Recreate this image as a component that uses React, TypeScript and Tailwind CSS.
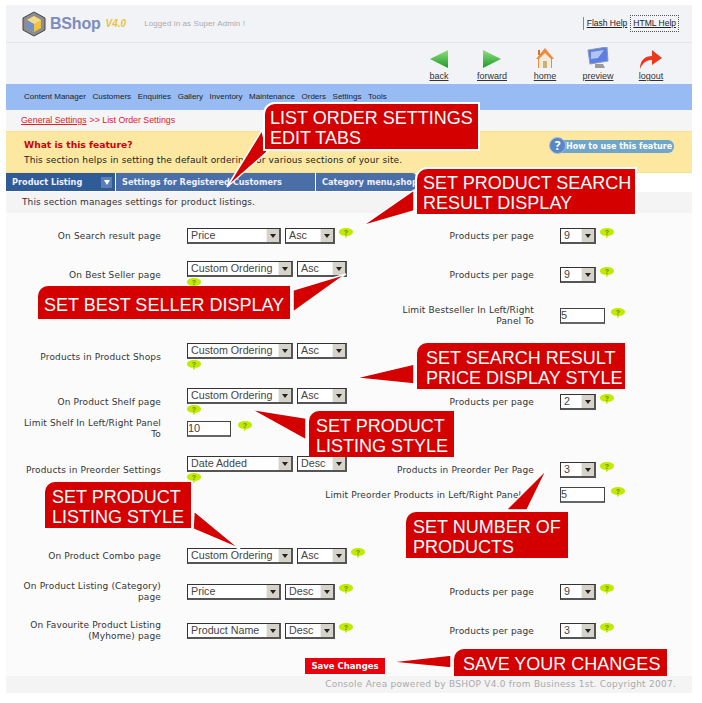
import type { ReactNode } from 'react';

const verdana = "font-['DejaVu_Sans',sans-serif]";
const arial = "font-['Liberation_Sans',Arial,sans-serif]";

function Help({ className = '' }: { className?: string }) {
  return (
    <svg width="14" height="11" viewBox="0 0 14 11" className={`shrink-0 ${className}`}>
      <path d="M7 0C11 0 14 1.6 14 4C14 6.4 11 7.6 8.5 7.8L6.5 10.5L6 7.8C3 7.6 0 6.4 0 4C0 1.6 3 0 7 0Z" fill="#c0ea00" />
      <text x="7" y="6.5" textAnchor="middle" fontSize="7" fontWeight="700" fill="#6f8a00" fontFamily="Liberation Sans">?</text>
    </svg>
  );
}

function Select({ value, width }: { value: string; width: string }) {
  return (
    <div className={`${width} ${arial} flex h-[16px] shrink-0 items-center justify-between border border-[#333] border-b-2 border-r-2 border-b-[#555] border-r-[#555] bg-white pl-[3px] text-[10.7px] leading-none text-[#444]`}>
      <span className="whitespace-nowrap">{value}</span>
      <span className="flex h-full w-[13px] items-center justify-center border-l border-l-[#eee] bg-[#d6d3cb]">
        <span className="h-0 w-0 border-x-[3px] border-t-[4px] border-x-transparent border-t-[#222]" />
      </span>
    </div>
  );
}

function Input({ value, width = 'w-[45px]' }: { value: string; width?: string }) {
  return (
    <div className={`${width} ${arial} flex h-[16px] shrink-0 items-center border border-[#444] border-b-2 border-b-[#666] bg-white text-[11px] leading-none text-[#444]`}>
      {value}
    </div>
  );
}

function Label({ children, className = '' }: { children: ReactNode; className?: string }) {
  return (
    <div className={`${verdana} text-right text-[9px] leading-[11px] tracking-[0.14px] text-[#333] ${className}`}>
      {children}
    </div>
  );
}

function Row({ className, label, left, rightLabel, right }: { className: string; label?: string; left?: ReactNode; rightLabel?: ReactNode; right?: ReactNode }) {
  return (
    <div className={`flex items-center ${className}`}>
      <div className="w-[155px] shrink-0 pl-4">{label && <Label>{label}</Label>}</div>
      <div className="ml-[26px] shrink-0">{left}</div>
      <div className="ml-auto flex items-center">
        {rightLabel}
        <div className="ml-[26px] flex w-[132px] items-start gap-[4px]">{right}</div>
      </div>
    </div>
  );
}

function Inline({ children, className = '' }: { children: ReactNode; className?: string }) {
  return <div className={`flex items-start gap-[4px] ${className}`}>{children}</div>;
}

function Wrapped({ first, second }: { first: string; second: string }) {
  return (
    <div className="flex flex-col gap-px">
      <div className="flex gap-[4px]">
        <Select value={first} width="w-[106px]" />
        <Select value={second} width="w-[50px]" />
      </div>
      <Help />
    </div>
  );
}

function perPage(value: string, label = 'Products per page') {
  return {
    rightLabel: <Label className="whitespace-nowrap">{label}</Label>,
    right: (
      <>
        <Select value={value} width="w-[36px]" />
        <Help />
      </>
    ),
  };
}

function Callout({ className, lines }: { className: string; lines: string[] }) {
  return (
    <div className={`absolute rounded-tl-[10px] bg-[#d40000] text-white ${arial} whitespace-nowrap text-[18px] leading-[20px] ${className}`}>
      {lines.map((line) => (
        <div key={line}>{line}</div>
      ))}
    </div>
  );
}

function Logo() {
  return (
    <svg width="24" height="26" viewBox="0 0 24 26">
      <path d="M12 1L23 7V19L12 25L1 19V7Z" fill="#8d8d8d" stroke="#444" strokeWidth="1" />
      <path d="M12 5L19 9V17L12 21L5 17V9Z" fill="#f0c040" />
      <path d="M12 5L19 9L12 13L5 9Z" fill="#f5d98a" />
      <path d="M5 9L12 13V21L5 17Z" fill="#6f8fd0" />
    </svg>
  );
}

function Tool({ label, icon, className }: { label: string; icon: ReactNode; className: string }) {
  return (
    <div className={`flex flex-col items-center ${className}`}>
      <div className="flex h-[24px] items-end">{icon}</div>
      <span className={`${arial} mt-[2px] text-[9px] leading-[10px] text-[#333] underline`}>{label}</span>
    </div>
  );
}

const navItems = ['Content Manager', 'Customers', 'Enquiries', 'Gallery', 'Inventory', 'Maintenance', 'Orders', 'Settings', 'Tools'];

export default function App() {
  return (
    <div className="relative h-[703px] w-[702px] overflow-hidden bg-white">
      <div className="ml-[6px] w-[686px] pt-[5px]">
        {/* header */}
        <div className="flex h-[38px] items-center border-b border-[#e6e6ea] bg-[#f2f3f7] pl-[16px]">
          <Logo />
          <span className={`${arial} ml-[4px] text-[16px] font-bold leading-none tracking-[-0.2px] text-[#7d8cbf]`}>BShop</span>
          <span className={`${arial} ml-[5px] text-[10px] font-bold italic leading-none text-[#e8c43c]`}>V4.0</span>
          <span className={`${arial} ml-[18px] text-[8px] tracking-[0.1px] text-[#aaa]`}>Logged in as Super Admin !</span>
          <div className={`${arial} ml-auto mr-[13px] flex items-center gap-[3px] text-[8.5px] text-[#222]`}>
            <span className="border-l border-[#888] pl-[3px] underline">Flash Help</span>
            <span className="border border-dotted border-[#555] px-[2px] py-[1px] underline">HTML Help</span>
          </div>
        </div>
        {/* toolbar */}
        <div className="flex h-[41px] items-start justify-end bg-[#f2f3f7] pt-[2px]">
          <Tool label="back" className="w-[40px]" icon={
            <svg width="18" height="20" viewBox="0 0 18 20"><defs><linearGradient id="g1" x1="0" y1="0" x2="0" y2="1"><stop offset="0" stopColor="#8ee07a" /><stop offset="1" stopColor="#1f9a2a" /></linearGradient></defs><path d="M18 1V19L0 10Z" fill="url(#g1)" /></svg>
          } />
          <Tool label="forward" className="ml-[13px] w-[40px]" icon={
            <svg width="18" height="20" viewBox="0 0 18 20"><path d="M0 1V19L18 10Z" fill="url(#g1)" /></svg>
          } />
          <Tool label="home" className="ml-[13px] w-[40px]" icon={
            <svg width="20" height="22" viewBox="0 0 20 22"><path d="M10 1L1 12H3V21H17V12H19Z" fill="#ee8a3a" /><path d="M4 12L10 6L16 12V21H4Z" fill="#f3ecdc" /><rect x="8" y="14" width="4" height="7" fill="#c9b27a" /><rect x="3" y="3" width="2" height="5" fill="#e07020" /></svg>
          } />
          <Tool label="preview" className="ml-[13px] w-[40px]" icon={
            <svg width="22" height="22" viewBox="0 0 22 22"><path d="M1 3L20 0L21 14L3 17Z" fill="#5d7fe0" stroke="#8b98b8" /><path d="M4 5L17 3L11 11L4 12Z" fill="#b0c4f5" /><path d="M8 17H16L18 21H8Z" fill="#9a9a9a" /></svg>
          } />
          <Tool label="logout" className="ml-[13px] mr-[21px] w-[40px]" icon={
            <svg width="22" height="20" viewBox="0 0 22 20"><path d="M0 20C0 11 5 7 12 7V1L22 9L12 16V11C7 11 3 13 0 20Z" fill="#e8391f" /></svg>
          } />
        </div>
        {/* nav */}
        <nav className={`${arial} flex h-[26px] items-center gap-[6.6px] bg-[#97bbf2] pl-[18px] text-[8px] text-[#222]`}>
          {navItems.map((item) => (
            <span key={item}>{item}</span>
          ))}
        </nav>
        {/* breadcrumb */}
        <div className={`${arial} flex h-[21px] items-center bg-[#f5f5f6] pl-[15px] text-[8.8px] text-[#e0202a]`}>
          <span className="underline">General Settings</span>
          <span className="ml-[3px]">&gt;&gt; List Order Settings</span>
        </div>
        {/* feature info */}
        <div className="relative flex h-[42px] flex-col justify-center border-y border-[#fadf90] bg-[#fde8a2] pl-[18px]">
          <div className={`${verdana} text-[9.2px] font-bold leading-[13px] text-[#d0000a]`}>What is this feature?</div>
          <div className={`${verdana} mt-[3px] text-[9px] leading-[12px] tracking-[0.14px] text-[#222]`}>This section helps in setting the default ordering for various sections of your site.</div>
          <div className="absolute right-[18px] top-[8px] flex h-[13px] w-[119px] items-center rounded-[6px] bg-[#6fa6c9]">
            <span className="absolute left-[-6px] top-[-3px] flex h-[17px] w-[17px] items-center justify-center rounded-full border border-[#9cc0e0] bg-[#5a86c8] text-[12px] font-bold leading-none text-white">?</span>
            <span className={`${verdana} ml-[11px] whitespace-nowrap text-[8px] font-bold text-white`}>How to use this feature</span>
          </div>
        </div>
        {/* tabs */}
        <div className={`${verdana} flex h-[18px] gap-[1px] text-[8.2px] font-bold text-[#eef]`}>
          <div className="flex w-[109px] items-center justify-between bg-[#2f5b97] pl-[6px] pr-[3px]">
            <span>Product Listing</span>
            <span className="flex h-[11px] w-[11px] items-center justify-center bg-[#5b80b5]">
              <span className="h-0 w-0 border-x-[3px] border-t-[5px] border-x-transparent border-t-white" />
            </span>
          </div>
          <div className="flex w-[199px] items-center bg-[#4a6fa8] pl-[6px]">Settings for Registered Customers</div>
          <div className="flex w-[100px] items-center whitespace-nowrap rounded-tr-[4px] bg-[#4a6fa8] pl-[6px]">Category menu,shop</div>
        </div>
        <div className={`${verdana} mt-px flex h-[21px] items-center bg-[#f4f4f5] pl-[16px] text-[9px] tracking-[0.12px] text-[#333]`}>
          This section manages settings for product listings.
        </div>
        {/* form */}
        <div className="h-[463px] bg-[#fbfbfc] pt-[8px]">
          <Row className="h-[30px]" label="On Search result page" left={<Inline><Select value="Price" width="w-[94px]" /><Select value="Asc" width="w-[50px]" /><Help /></Inline>} {...perPage('9')} />
          <Row className="mt-[9px] h-[30px]" label="On Best Seller page" left={<Wrapped first="Custom Ordering" second="Asc" />} {...perPage('9')} />
          <Row className="mt-[11px] h-[30px]" left={<div />} rightLabel={<Label className="w-[140px]">Limit Bestseller In Left/Right Panel To</Label>} right={<><Input value="5" /><Help className="ml-[2px]" /></>} />
          <Row className="mt-[11px] h-[30px]" label="Products in Product Shops" left={<Wrapped first="Custom Ordering" second="Asc" />} />
          <Row className="mt-[15px] h-[30px]" label="On Product Shelf page" left={<Wrapped first="Custom Ordering" second="Asc" />} {...perPage('2')} />
          <Row className="h-[24px]" label="Limit Shelf In Left/Right Panel To" left={<Inline className="gap-[7px]"><Input value="10" width="w-[44px]" /><Help /></Inline>} />
          <Row className="mt-[14px] h-[30px]" label="Products in Preorder Settings" left={<Wrapped first="Date Added" second="Desc" />} {...perPage('3', 'Products in Preorder Per Page')} />
          <Row className="h-[20px]" rightLabel={<Label className="whitespace-nowrap">Limit Preorder Products in Left/Right Panel To</Label>} right={<><Input value="5" /><Help className="ml-[2px]" /></>} />
          <Row className="mt-[36px] h-[30px]" label="On Product Combo page" left={<Inline><Select value="Custom Ordering" width="w-[106px]" /><Select value="Asc" width="w-[50px]" /><Help /></Inline>} />
          <Row className="mt-[6px] h-[30px]" label="On Product Listing (Category) page" left={<Inline><Select value="Price" width="w-[94px]" /><Select value="Desc" width="w-[50px]" /><Help /></Inline>} {...perPage('9')} />
          <Row className="mt-[9px] h-[30px]" label="On Favourite Product Listing (Myhome) page" left={<Inline><Select value="Product Name" width="w-[94px]" /><Select value="Desc" width="w-[50px]" /><Help /></Inline>} {...perPage('3')} />
          <div className="mt-[12px] flex justify-center pr-[8px]">
            <button className={`${verdana} h-[16px] w-[80px] bg-[#e8000c] text-[8.5px] font-bold text-white`}>Save Changes</button>
          </div>
        </div>
        <div className={`${verdana} flex h-[17px] items-center justify-end bg-[#f4f4f5] pr-[16px] text-[9px] tracking-[0.25px] text-[#aaa]`}>
          Console Area powered by BSHOP V4.0 from Business 1st. Copyright 2007.
        </div>
      </div>

      {/* annotation tails */}
      <svg className="absolute left-0 top-0" width="702" height="703" viewBox="0 0 702 703">
        <g fill="#d40000" stroke="#fff" strokeWidth="1.5">
          <path d="M262 130L227 187L267 152Z" />
          <path d="M414 190L362 226L414 211Z" />
          <path d="M293 290L346 274L293 312Z" />
          <path d="M414 364L355 378L414 384Z" />
          <path d="M306 418L250 409L306 440Z" />
          <path d="M194 511L240 549L193 529Z" />
          <path d="M506 510L547 469L527 510Z" />
          <path d="M451 655L389 662L451 668Z" />
        </g>
      </svg>

      <Callout className="left-[265px] top-[104px] h-[45px] w-[213px] pl-[5px] pt-[4px] shadow-[0_0_0_2px_#fff]" lines={['LIST ORDER SETTINGS', 'EDIT TABS']} />
      <Callout className="left-[417px] top-[169px] h-[45px] w-[218px] pl-[6px] pt-[4px] shadow-[0_0_0_2px_#fff]" lines={['SET PRODUCT SEARCH', 'RESULT DISPLAY']} />
      <Callout className="left-[38px] top-[286px] h-[33px] w-[252px] pl-[6px] pt-[9px]" lines={['SET BEST SELLER DISPLAY']} />
      <Callout className="left-[417px] top-[343px] h-[46px] w-[208px] pl-[9px] pt-[5px]" lines={['SET SEARCH RESULT', 'PRICE DISPLAY STYLE']} />
      <Callout className="left-[309px] top-[411px] h-[46px] w-[145px] pl-[7px] pt-[5px]" lines={['SET PRODUCT', 'LISTING STYLE']} />
      <Callout className="left-[45px] top-[482px] h-[46px] w-[146px] pl-[7px] pt-[5px]" lines={['SET PRODUCT', 'LISTING STYLE']} />
      <Callout className="left-[406px] top-[512px] h-[46px] w-[162px] pl-[7px] pt-[5px]" lines={['SET NUMBER OF', 'PRODUCTS']} />
      <Callout className="left-[454px] top-[649px] h-[27px] w-[213px] pl-[9px] pt-[5px]" lines={['SAVE YOUR CHANGES']} />
    </div>
  );
}
